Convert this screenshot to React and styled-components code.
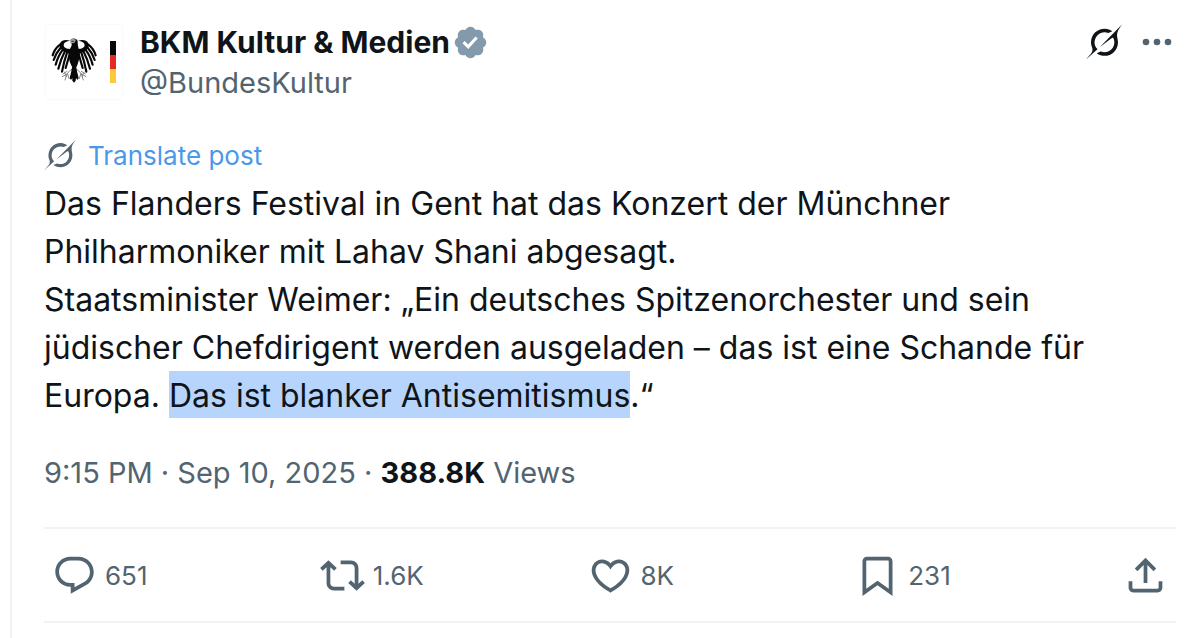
import React from "react";
import styled, { createGlobalStyle } from "styled-components";

const ink = "#0f1419";
const muted = "#536471";
const line = "#eff3f4";

const GlobalStyle = createGlobalStyle`
  * { box-sizing: border-box; }
  body {
    margin: 0;
    background: #fff;
    color: ${ink};
    font-family: Inter, "Liberation Sans", sans-serif;
  }
  svg { display: block; flex: none; fill: currentColor; }
  button { border: 0; padding: 0; background: none; font: inherit; cursor: pointer; }
`;

const Post = styled.article`
  margin-left: 10px;
  border-left: 2px solid ${line};
  min-height: 100vh;
  padding: 24px 16px 0 32px;
`;

const Header = styled.header`
  display: flex;
  align-items: flex-start;
`;

const Avatar = styled.a`
  flex: none;
  width: 80px;
`;

const Author = styled.div`
  flex: 1;
  min-width: 0;
  padding-left: 16px;
`;

const NameRow = styled.div`
  display: flex;
  align-items: center;
  gap: 2px;
  height: 36px;
  color: #829aab;
`;

const Name = styled.a`
  color: ${ink};
  font-size: 30px;
  font-weight: 700;
  line-height: 36px;
  text-decoration: none;
`;

const Handle = styled.a`
  display: block;
  color: ${muted};
  font-size: 29px;
  line-height: 46px;
  text-decoration: none;
`;

const HeaderActions = styled.div`
  display: flex;
  align-items: center;
  gap: 20px;
  height: 36px;
  padding-right: 4px;
`;

const IconButton = styled.button`
  color: ${(p) => (p.$strong ? ink : muted)};
`;

const Translate = styled.button`
  display: flex;
  align-items: center;
  gap: 12px;
  height: 50px;
  margin-top: 24px;
  color: #4a99e9;
  font-size: 26px;

  svg { color: ${muted}; }
`;

const Body = styled.p`
  margin: 0;
  font-size: 32px;
  line-height: 48px;
`;

const Selected = styled.span`
  padding: 5px 0 3px;
  background: #b7d5fc;
`;

const Meta = styled.div`
  margin-top: 33px;
  padding-bottom: 34px;
  color: ${muted};
  font-size: 29px;
  line-height: 40px;
  border-bottom: 2px solid ${line};

  strong { color: ${ink}; }
`;

const Actions = styled.div`
  display: flex;
  align-items: center;
  height: 94px;
  padding: 0 8px;
  border-bottom: 2px solid ${line};
`;

const ActionSlot = styled.div`
  flex: ${(p) => (p.$last ? "none" : "1 1 0")};
`;

const Action = styled.button`
  display: flex;
  align-items: center;
  gap: 8px;
  color: ${muted};
  font-size: 26px;
`;

const iconPaths = {
  reply:
    "M1.751 10c0-4.42 3.584-8 8.005-8h4.366c4.49 0 8.129 3.64 8.129 8.13 0 2.96-1.607 5.68-4.196 7.11l-8.054 4.46v-3.69h-.067c-4.49.1-8.183-3.51-8.183-8.01zm8.005-6c-3.317 0-6.005 2.69-6.005 6 0 3.37 2.77 6.08 6.138 6.01l.351-.01h1.761v2.3l5.087-2.81c1.951-1.08 3.163-3.13 3.163-5.36 0-3.39-2.744-6.13-6.129-6.13H9.756z",
  repost:
    "M4.5 3.88l4.432 4.14-1.364 1.46L5.5 7.55V16c0 1.1.896 2 2 2H13v2H7.5c-2.209 0-4-1.79-4-4V7.55L1.432 9.48.068 8.02 4.5 3.88zM16.5 6H11V4h5.5c2.209 0 4 1.79 4 4v8.45l2.068-1.93 1.364 1.46-4.432 4.14-4.432-4.14 1.364-1.46 2.068 1.93V8c0-1.1-.896-2-2-2z",
  like:
    "M16.697 5.5c-1.222-.06-2.679.51-3.89 2.16l-.805 1.09-.806-1.09C9.984 6.01 8.526 5.44 7.304 5.5c-1.243.07-2.349.78-2.91 1.91-.552 1.12-.633 2.78.479 4.82 1.074 1.97 3.257 4.27 7.129 6.61 3.87-2.34 6.052-4.64 7.126-6.61 1.111-2.04 1.03-3.7.477-4.82-.561-1.13-1.666-1.84-2.908-1.91zm4.187 7.69c-1.351 2.48-4.001 5.12-8.379 7.67l-.503.3-.504-.3c-4.379-2.55-7.029-5.19-8.382-7.67-1.36-2.5-1.41-4.86-.514-6.67.887-1.79 2.647-2.91 4.601-3.01 1.651-.09 3.368.56 4.798 2.01 1.429-1.45 3.146-2.1 4.796-2.01 1.954.1 3.714 1.22 4.601 3.01.896 1.81.846 4.17-.514 6.67z",
  bookmark:
    "M4 4.5C4 3.12 5.119 2 6.5 2h11C18.881 2 20 3.12 20 4.5v18.44l-8-5.71-8 5.71V4.5zM6.5 4c-.276 0-.5.22-.5.5v14.56l6-4.29 6 4.29V4.5c0-.28-.224-.5-.5-.5h-11z",
  share:
    "M12 2.59l5.7 5.7-1.41 1.42L13 6.41V16h-2V6.41l-3.3 3.3-1.41-1.42L12 2.59zM21 15l-.02 3.51c0 1.38-1.12 2.49-2.5 2.49H5.5C4.11 21 3 19.88 3 18.5V15h2v3.5c0 .28.22.5.5.5h12.98c.28 0 .5-.22.5-.5L19 15h2z",
};

const Icon = ({ name }) => (
  <svg width="45" height="45" viewBox="0 0 24 24" aria-hidden="true">
    <path d={iconPaths[name]} />
  </svg>
);

const GrokIcon = ({ size }) => (
  <svg width={size} height={size} viewBox="0 0 33 32" aria-hidden="true">
    <path d="M12.745 20.54l10.97-8.19c.539-.4 1.307-.244 1.564.38 1.349 3.288.746 7.241-1.938 9.955-2.683 2.714-6.417 3.31-9.83 1.954l-3.728 1.745c5.347 3.697 11.84 2.782 15.898-1.324 3.219-3.255 4.216-7.692 3.284-11.693l.008.009c-1.351-5.878.332-8.227 3.782-13.031L33 0l-4.54 4.59v-.014L12.743 20.544m-2.263 1.987c-3.837-3.707-3.175-9.446.1-12.755 2.42-2.449 6.388-3.448 9.852-1.979l3.72-1.737c-.67-.49-1.53-1.017-2.515-1.387-4.455-1.854-9.789-.931-13.41 2.728-3.483 3.523-4.579 8.94-2.697 13.561 1.405 3.454-.899 5.898-3.22 8.364C1.49 30.2.666 31.074 0 32l10.478-9.466" />
  </svg>
);

const MoreIcon = () => (
  <svg width="30" height="36" viewBox="0 0 30 36" aria-hidden="true">
    <circle cx="4" cy="18" r="3.3" />
    <circle cx="15" cy="18" r="3.3" />
    <circle cx="26" cy="18" r="3.3" />
  </svg>
);

const VerifiedIcon = () => (
  <svg width="37" height="37" viewBox="0 0 22 22" role="img" aria-label="Verified account">
    <path d="M20.396 11c-.018-.646-.215-1.275-.57-1.816-.354-.54-.852-.972-1.438-1.246.223-.607.27-1.264.14-1.897-.131-.634-.437-1.218-.882-1.687-.47-.445-1.053-.75-1.687-.882-.633-.13-1.29-.083-1.897.14-.273-.587-.704-1.086-1.245-1.44S11.647 1.62 11 1.604c-.646.017-1.273.213-1.813.568s-.969.854-1.24 1.44c-.608-.223-1.267-.272-1.902-.14-.635.13-1.22.436-1.69.882-.445.47-.749 1.055-.878 1.688-.13.633-.08 1.29.144 1.896-.587.274-1.087.705-1.443 1.245-.356.54-.555 1.17-.574 1.817.02.647.218 1.276.574 1.817.356.54.856.972 1.443 1.245-.224.606-.274 1.263-.144 1.896.13.634.433 1.218.877 1.688.47.443 1.054.747 1.687.878.633.132 1.29.084 1.897-.136.274.586.705 1.084 1.246 1.439.54.354 1.17.551 1.816.569.647-.016 1.276-.213 1.817-.567s.972-.854 1.245-1.44c.604.239 1.266.296 1.903.164.636-.132 1.22-.447 1.68-.907.46-.46.776-1.044.908-1.681s.075-1.299-.165-1.903c.586-.274 1.084-.705 1.439-1.246.354-.54.551-1.17.569-1.816zM9.662 14.85l-3.429-3.428 1.293-1.302 2.072 2.072 4.4-4.794 1.347 1.246z" />
  </svg>
);

const Wing = () => (
  <>
    <path d="M84 82 C79 68 70 63 60 60 C47 55 41 44 45 34 C50 24 64 22 76 27 C64 27 56 32 56 40 C57 48 66 51 74 51 C82 52 88 56 88 66Z" />
    <g fill="none" stroke="#080808" strokeWidth="6.5" strokeLinecap="round">
      <path d="M45 38 Q29 50 23 70" />
      <path d="M47 47 Q33 62 26 84" />
      <path d="M52 55 Q39 72 32 98" />
      <path d="M59 59 Q47 82 40 110" />
      <path d="M66 62 Q57 88 51 119" />
      <path d="M74 66 Q68 88 62 108" />
    </g>
    <g fill="none" stroke="#888" strokeWidth="3" strokeLinecap="round">
      <path d="M80 112 Q72 116 66 126 M66 118 L54 126 M66 126 L52 134 M66 126 L60 144 M68 126 L72 140 M58 120 L64 134" />
    </g>
  </>
);

const MinistryLogo = () => (
  <svg width="80" height="76" viewBox="0 0 80 76" role="img" aria-label="BKM Kultur & Medien">
    <rect x="1.5" y=".5" width="77" height="75" fill="#fff" stroke="#f9fafa" />
    <g transform="translate(1 8) scale(.3333)" fill="#080808">
      <Wing />
      <g transform="translate(175 0) scale(-1 1)">
        <Wing />
      </g>
      <path d="M77 24 C82 17 96 18 98 28 C98 38 99 44 102 54 C106 74 101 90 95 104 L81 104 C74 92 68 74 73 54 C77 46 81 42 80 36Z" />
      <path d="M83 96 L78 122 L74 138 L78 144 L82 138 L82 146 L87 152 L92 146 L93 138 L97 144 L101 138 L97 122 L92 96Z" />
      <path d="M75 24 L84 20 L93 23 L88 33 L76 34Z" fill="#a5a5a5" />
      <path d="M79 28 h8" stroke="#333" strokeWidth="3" />
    </g>
    <path d="M66 17h6v14h-6z" fill="#080808" />
    <path d="M66 31h6v14h-6z" fill="#e52a24" />
    <path d="M66 45h6v14h-6z" fill="#fcc83c" />
  </svg>
);

const actions = [
  { name: "reply", count: "651", label: "Reply" },
  { name: "repost", count: "1.6K", label: "Repost" },
  { name: "like", count: "8K", label: "Like" },
  { name: "bookmark", count: "231", label: "Bookmark" },
  { name: "share", label: "Share" },
];

export default function App() {
  return (
    <>
      <GlobalStyle />
      <Post>
        <Header>
          <Avatar href="#profile">
            <MinistryLogo />
          </Avatar>
          <Author>
            <NameRow>
              <Name href="#profile">BKM Kultur &amp; Medien</Name>
              <VerifiedIcon />
            </NameRow>
            <Handle href="#profile">@BundesKultur</Handle>
          </Author>
          <HeaderActions>
            <IconButton $strong aria-label="Explain this post">
              <GrokIcon size={36} />
            </IconButton>
            <IconButton aria-label="More">
              <MoreIcon />
            </IconButton>
          </HeaderActions>
        </Header>
        <Translate>
          <GrokIcon size={32} />
          Translate post
        </Translate>
        <Body lang="de">
          Das Flanders Festival in Gent hat das Konzert der Münchner Philharmoniker mit Lahav Shani
          abgesagt.
          <br />
          Staatsminister Weimer: „Ein deutsches Spitzenorchester und sein jüdischer Chefdirigent
          werden ausgeladen – das ist eine Schande für Europa.{" "}
          <Selected>Das ist blanker Antisemitismus</Selected>.“
        </Body>
        <Meta>
          <time dateTime="2025-09-10T21:15">9:15 PM · Sep 10, 2025</time> · <strong>388.8K</strong>{" "}
          Views
        </Meta>
        <Actions>
          {actions.map(({ name, count, label }) => (
            <ActionSlot key={name} $last={!count}>
              <Action aria-label={count ? `${count} ${label}` : label}>
                <Icon name={name} />
                {count}
              </Action>
            </ActionSlot>
          ))}
        </Actions>
      </Post>
    </>
  );
}
